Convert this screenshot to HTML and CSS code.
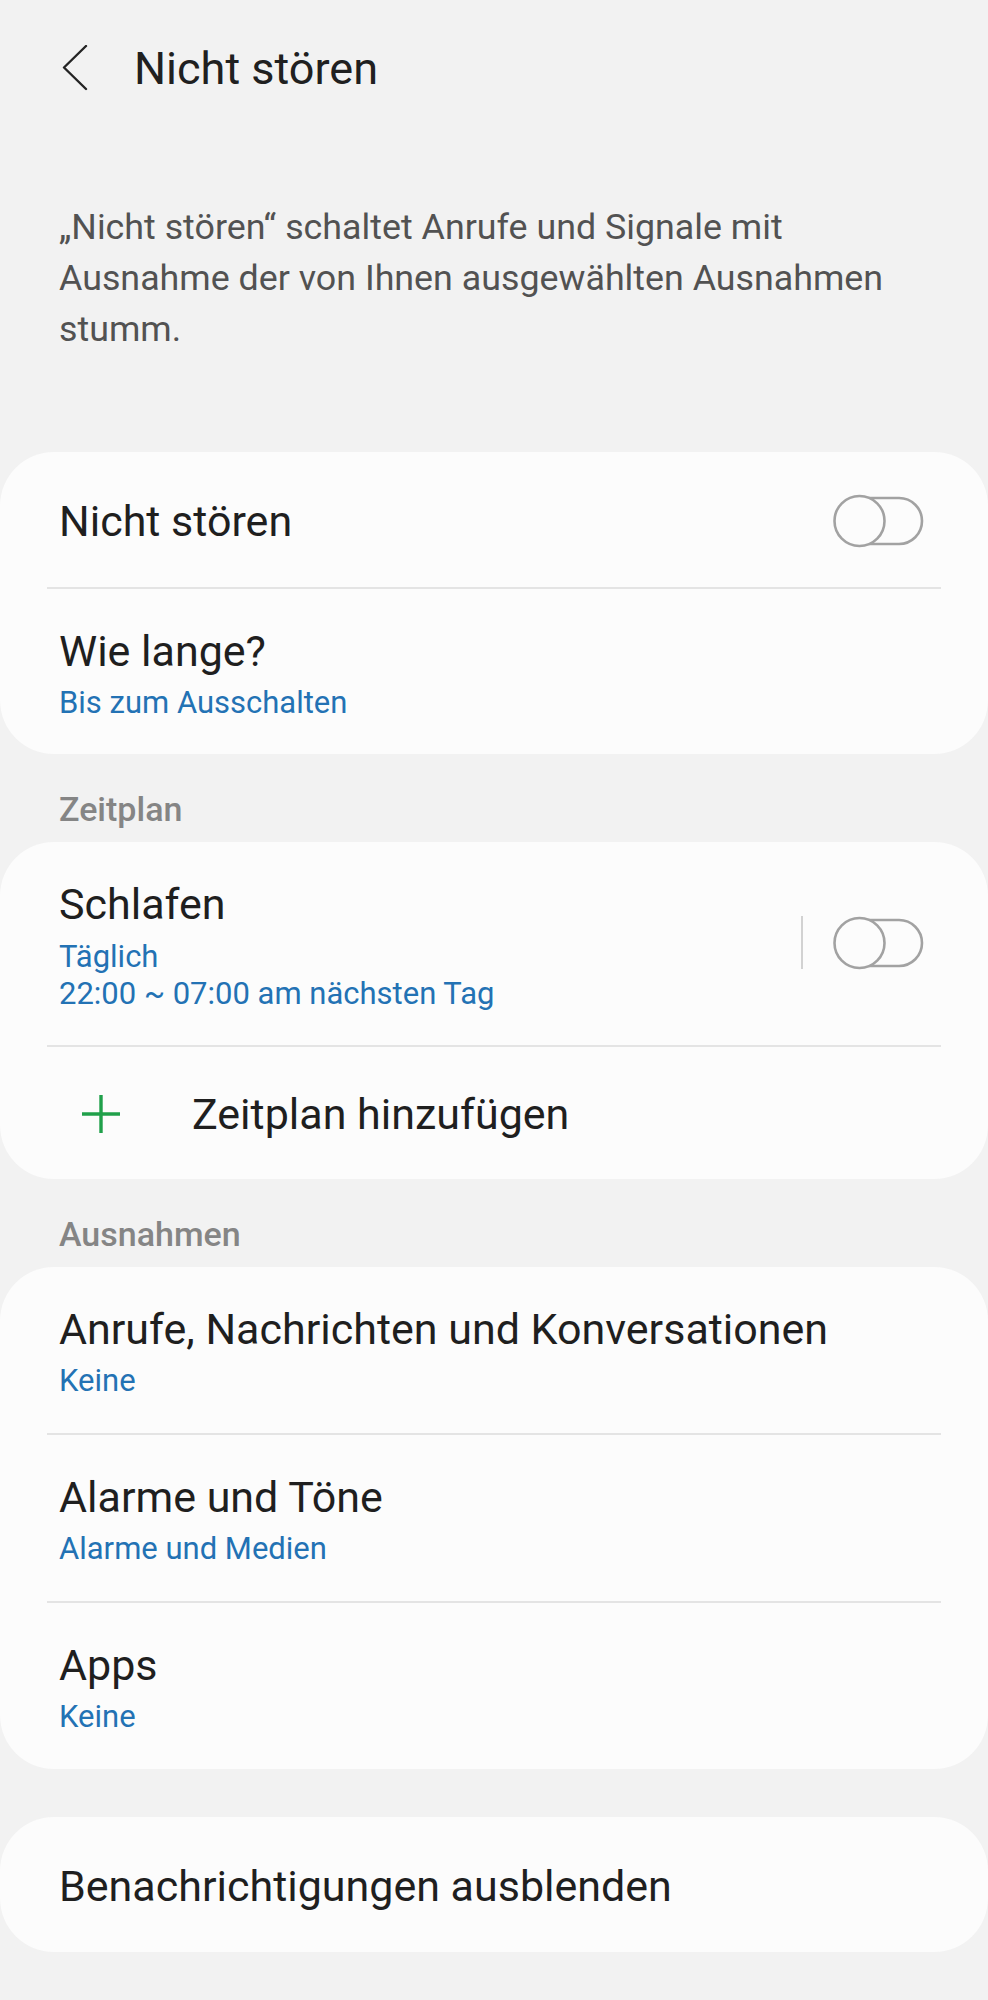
FILE: index.html
```html
<!DOCTYPE html>
<html lang="de">
<head>
<meta charset="utf-8">
<title>Nicht stören</title>
<link rel="stylesheet" href="styles.css">
</head>
<body>
<div class="screen">
  <header class="appbar">
    <svg class="back" viewBox="0 0 30 50" width="30" height="50" aria-hidden="true">
      <path d="M25 1 L3 22.5 L25 44" fill="none" stroke="#242424" stroke-width="2.4" stroke-linecap="round" stroke-linejoin="round"/>
    </svg>
    <h1 class="appbar-title">Nicht stören</h1>
  </header>

  <p class="intro">„Nicht stören“ schaltet Anrufe und Signale mit Ausnahme der von Ihnen ausgewählten Ausnahmen stumm.</p>

  <section class="card">
    <div class="row single">
      <div class="text"><div class="title">Nicht stören</div></div>
      <svg class="toggle" viewBox="0 0 92 54" width="92" height="54" aria-hidden="true">
        <rect x="10" y="4" width="80" height="46" rx="23" fill="#fcfcfc" stroke="#a2a2a2" stroke-width="2.6"/>
        <circle cx="27.5" cy="27" r="25" fill="#fcfcfc" stroke="#a2a2a2" stroke-width="2.6"/>
      </svg>
    </div>
    <div class="divider"></div>
    <div class="row tight">
      <div class="text">
        <div class="title">Wie lange?</div>
        <div class="sub">Bis zum Ausschalten</div>
      </div>
    </div>
  </section>

  <h2 class="section-label">Zeitplan</h2>
  <section class="card">
    <div class="row schedule">
      <div class="text">
        <div class="title">Schlafen</div>
        <div class="sub">Täglich</div>
        <div class="sub">22:00 ~ 07:00 am nächsten Tag</div>
      </div>
      <div class="vsep"></div>
      <svg class="toggle" viewBox="0 0 92 54" width="92" height="54" aria-hidden="true">
        <rect x="10" y="4" width="80" height="46" rx="23" fill="#fcfcfc" stroke="#a2a2a2" stroke-width="2.6"/>
        <circle cx="27.5" cy="27" r="25" fill="#fcfcfc" stroke="#a2a2a2" stroke-width="2.6"/>
      </svg>
    </div>
    <div class="divider"></div>
    <div class="row add">
      <svg class="plus" viewBox="0 0 40 40" width="40" height="40" aria-hidden="true">
        <path d="M20 1 V39 M1 20 H39" fill="none" stroke="#20a04a" stroke-width="3.4"/>
      </svg>
      <div class="text"><div class="title">Zeitplan hinzufügen</div></div>
    </div>
  </section>

  <h2 class="section-label">Ausnahmen</h2>
  <section class="card">
    <div class="row">
      <div class="text">
        <div class="title">Anrufe, Nachrichten und Konversationen</div>
        <div class="sub">Keine</div>
      </div>
    </div>
    <div class="divider"></div>
    <div class="row">
      <div class="text">
        <div class="title">Alarme und Töne</div>
        <div class="sub">Alarme und Medien</div>
      </div>
    </div>
    <div class="divider"></div>
    <div class="row">
      <div class="text">
        <div class="title">Apps</div>
        <div class="sub">Keine</div>
      </div>
    </div>
  </section>

  <section class="card last">
    <div class="row single">
      <div class="text"><div class="title">Benachrichtigungen ausblenden</div></div>
    </div>
  </section>
</div>
</body>
</html>
```

FILE: styles.css
```css
* {
  box-sizing: border-box;
}

html, body {
  margin: 0;
  padding: 0;
  background: #f2f2f2;
}

body {
  font-family: Roboto, "Noto Sans", "Liberation Sans", sans-serif;
  color: #202020;
}

.screen {
  width: 988px;
  min-height: 2000px;
  display: flex;
  flex-direction: column;
}

.appbar {
  display: flex;
  align-items: flex-start;
  padding: 45px 0 0 61px;
  height: 95px;
}

.back {
  display: block;
  flex: none;
}

.appbar-title {
  margin: -1px 0 0 43px;
  font-size: 45px;
  line-height: 50px;
  font-weight: 400;
  color: #202020;
}

.intro {
  margin: 107px 0 0;
  padding: 0 59px;
  font-size: 35.8px;
  line-height: 51px;
  color: #525252;
}

.card {
  background: #fcfcfc;
  border-radius: 54px;
  margin-top: 97px;
  display: flex;
  flex-direction: column;
}

.card.last {
  margin-top: 48px;
}

.section-label {
  margin: 35px 0 13px;
  padding: 0 59px;
  font-size: 34px;
  line-height: 40px;
  font-weight: 500;
  color: #858585;
}

.section-label + .card {
  margin-top: 0;
}

.row {
  display: flex;
  align-items: center;
  padding: 31px 64px 34px 59px;
}

.row.tight {
  padding-bottom: 33px;
}

.row.single {
  padding-top: 38px;
  padding-bottom: 35px;
}

.row.schedule {
  padding-bottom: 33px;
}

.row.schedule .sub {
  line-height: 37px;
}

.row.add {
  padding: 36px 64px 34px 81px;
}

.text {
  flex: 1;
  min-width: 0;
}

.title {
  font-size: 43px;
  line-height: 62px;
  color: #1f1f1f;
}

.title + .sub {
  margin-top: 3px;
}

.sub {
  font-size: 31px;
  line-height: 36px;
  color: #2372b4;
}

.divider {
  height: 2px;
  margin: 0 47px;
  background: #e4e4e4;
}

.toggle {
  display: block;
  flex: none;
}

.vsep {
  flex: none;
  width: 2px;
  height: 53px;
  background: #d2d2d2;
  margin-right: 29px;
}

.plus {
  display: block;
  flex: none;
  margin-right: 71px;
}
```
